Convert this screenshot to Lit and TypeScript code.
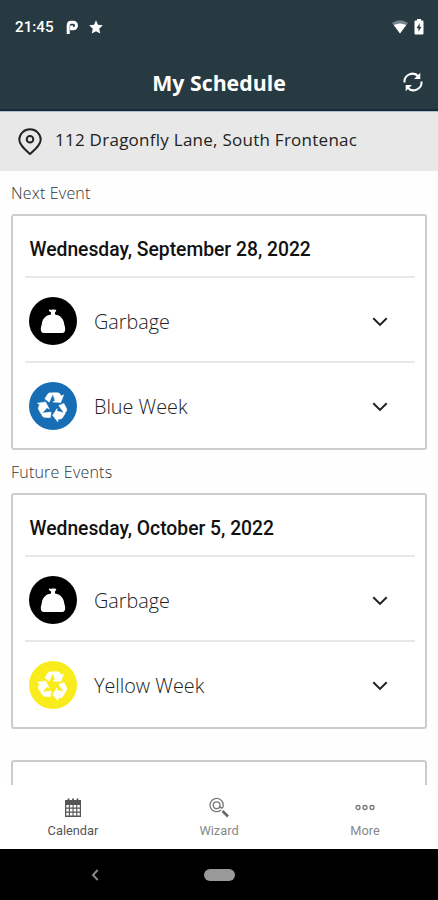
import { LitElement, html, css, svg } from "lit";
import { customElement } from "lit/decorators.js";

const chevron = html`<svg class="chev" viewBox="0 0 18 12" width="18" height="12"><path d="M2.300 2.200 9 8.900 15.700 2.200" fill="none" stroke="#222" stroke-width="2"/></svg>`;

const garbage = svg`<path fill="#fff" d="M20.400 12.600q1.500.5 3 0t3.400.2q.9.400.3 1.300l-1.100 1.500v2c5.600.8 8.600 4.500 9.200 9.400.3 1.500 1 3.200 1 5.100 0 2.500-1.100 3.900-3 3.900H14.800c-1.900 0-3-1.400-3-3.900 0-1.900.7-3.600 1-5.100.6-4.900 3.600-8.600 9.200-9.400v-2l-1.900-1.700q-.7-.9.300-1.300z"/>`;

const arrow = () => svg`<path d="M15.800 16.800 18.900 11.900Q19.800 10.700 21.600 10.700L24 11.500 20.200 20.200Z"/><path d="M23.300 10.700H28.700Q30.200 10.700 31.100 12.200L32.300 14 34.700 12.800 31.800 20.500 23.700 20.100 26.100 18.700Z"/>`;
const recycle = svg`<g fill="#fff" stroke="#fff" stroke-width=".5">
  ${[0, 120, 240].map((a) => svg`<g transform="rotate(${a} 24 24.600)">${arrow()}</g>`)}
</g>`;

interface Pickup { name: string; color: string; icon: unknown; }
const events: { date: string; items: Pickup[] }[] = [
  { date: "Wednesday, September 28, 2022", items: [{ name: "Garbage", color: "#000", icon: garbage }, { name: "Blue Week", color: "#176eb4", icon: recycle }] },
  { date: "Wednesday, October 5, 2022", items: [{ name: "Garbage", color: "#000", icon: garbage }, { name: "Yellow Week", color: "#f8ec1c", icon: recycle }] },
];

@customElement("app-root")
export class AppRoot extends LitElement {
  static styles = css`
    :host { display: flex; flex-direction: column; width: 438px; height: 900px; overflow: hidden; background: #fefefe; font-family: "Open Sans", sans-serif; color: #222; }
    * { box-sizing: border-box; }
    svg { display: block; flex: none; }
    .top { background: #273a41; height: 111px; flex: none; border-bottom: 2px solid #102c3f; color: #fff; }
    .status { height: 54px; display: flex; align-items: center; padding: 0 14px 0 15px; font: 500 15.200px/20px Roboto, sans-serif; }
    .status .p { margin-left: 12px; }
    .status .star { margin-left: 10px; }
    .status .wifi { margin-left: auto; }
    .status .bat { margin-left: 6px; }
    .bar { height: 55px; display: grid; grid-template-columns: 35px 1fr 35px; align-items: center; }
    h1 { grid-column: 2; margin: 2px 0 0; text-align: center; font-size: 21.300px; line-height: 30px; font-weight: 700; }
    .addr { height: 60px; flex: none; background: #e8e8e8; display: flex; align-items: center; padding-left: 18px; gap: 13px; font-size: 17px; letter-spacing: .26px; border-top: 1px solid #b5bcc0; white-space: nowrap; }
    .addr span { margin-bottom: 4px; }
    .list { flex: 1; min-height: 0; overflow: hidden; padding: 0 11px; }
    h2 { margin: 0; height: 43px; padding-top: 11px; font-size: 16px; letter-spacing: .2px; line-height: 22px; font-weight: 300; color: #333; }
    .card { border: 2px solid #c9cdce; border-radius: 3px; height: 236px; background: #fff; padding: 0 10px 0 12px; }
    .card.last { margin-top: 31px; }
    .date { height: 60px; padding: 7px 0 0 4.500px; font: 500 19.300px/54px Roboto, sans-serif; color: #111; white-space: nowrap; }
    .row { height: 85px; border-top: 2px solid #e7e8e8; display: flex; align-items: center; padding: 3px 26px 0 4px; font-size: 19.800px; font-weight: 300; }
    .row .name { margin-left: 17px; flex: 1; }
    .chev { margin-top: 1px; }
    .tabs { height: 64px; flex: none; background: #fff; display: grid; grid-template-columns: repeat(3, 146px); font: 400 12.800px/16px Roboto, sans-serif; color: #888; }
    .tab { display: flex; flex-direction: column; align-items: center; padding-top: 11px; gap: 5px; }
    .tab svg { height: 22px; }
    .tab.on { color: #555; }
    .sys { height: 51px; flex: none; background: #000; display: flex; align-items: center; padding-left: 90px; }
    .pill { width: 31px; height: 12px; border-radius: 6px; background: #999; margin-left: 104px; }
  `;

  card(e: (typeof events)[number]) {
    return html`<section class="card">
      <div class="date"><span>${e.date}</span></div>
      ${e.items.map((i) => html`<div class="row">
        <svg viewBox="0 0 48 48" width="48" height="48"><circle cx="24" cy="24" r="24" fill=${i.color} />${i.icon}</svg>
        <span class="name"><span>${i.name}</span></span>${chevron}
      </div>`)}
    </section>`;
  }

  render() {
    return html`
      <header class="top">
        <div class="status"><span>21:45</span>
          <svg class="p" width="13" height="15" viewBox="0 0 13 15"><path d="M2.200 14V5.500Q2.200 2.200 5 2.200H7.200a3.200 3.200 0 0 1 0 6.600H5.600V5.500" fill="none" stroke="#fff" stroke-width="3"/></svg>
          <svg class="star" width="14" height="14" viewBox="0 0 14 14"><path fill="#fff" d="M7 .3 9 4.800l4.800.5-3.600 3.400 1 4.900L7 11.200l-4.200 2.400 1-4.900L.2 5.300 5 4.800z"/></svg>
          <svg class="wifi" width="16" height="14" viewBox="0 0 16 14"><path fill="#77838a" d="M0 3Q8-2.500 16 3L8 13.500z"/><path fill="#fff" d="M1.800 5Q8 2 14.200 5L8 13.500z"/></svg>
          <svg class="bat" width="10" height="16" viewBox="0 0 10 16"><path fill="#fff" d="M3 0h4v1.500h1.500Q9.500 1.500 9.500 2.500v12q0 1-1 1h-7q-1 0-1-1v-12q0-1 1-1H3z"/><path fill="#273a41" d="M5.800 4 2.500 9.200h2v3.600L7.500 7.700h-2z"/></svg>
        </div>
        <div class="bar"><h1><span>My Schedule</span></h1>
          <svg width="20" height="20" viewBox="0 0 20 20"><g fill="none" stroke="#fff" stroke-width="2"><path d="M1.500 10.500A8 8 0 0 1 15.500 4.500M18.500 9.500A8 8 0 0 1 4.500 15.500"/></g><path fill="#fff" d="M17.300.8V7H11zM2.700 19.200V13H9z"/></svg>
        </div>
      </header>
      <div class="addr">
        <svg width="24" height="28" viewBox="0 0 24 28"><g fill="none" stroke="#222" stroke-width="2"><path d="M12 26C7 21.500 1.300 17 1.300 11.700a10.700 10.400 0 0 1 21.400 0C22.700 17 17 21.500 12 26z"/><circle cx="12" cy="11.300" r="3.300"/></g></svg>
        <span>112 Dragonfly Lane, South Frontenac</span>
      </div>
      <main class="list">
        <h2><span>Next Event</span></h2>${this.card(events[0])}
        <h2><span>Future Events</span></h2>${this.card(events[1])}
        <section class="card last"></section>
      </main>
      <nav class="tabs">
        <div class="tab on"><svg width="18" height="22" viewBox="0 0 18 22"><path fill="#555" fill-rule="evenodd" d="M1 4h16v17H1zM2.300 9v2.500h2.500V9zm3.600 0v2.500h2.600V9zm3.700 0v2.500h2.600V9zm3.700 0v2.500h2.500V9zM2.300 12.800v2.600h2.500v-2.600zm3.600 0v2.600h2.600v-2.600zm3.700 0v2.600h2.600v-2.600zm3.700 0v2.600h2.500v-2.600zM2.300 16.700v2.800h2.500v-2.800zm3.600 0v2.800h2.600v-2.800zm3.700 0v2.800h2.600v-2.800zm3.700 0v2.800h2.500v-2.800z"/><path d="M4.500 2.500v4M9 2.500v4M13.500 2.500v4" stroke="#555" stroke-width="1.800"/></svg><span>Calendar</span></div>
        <div class="tab"><svg width="20" height="22" viewBox="0 0 20 22"><g fill="none" stroke="#777" stroke-width="1.300"><path d="M12 14A6.600 6.600 0 1 1 14.200 9q0 3-1.700 3Q11 12 11 10"/><circle cx="7.600" cy="9.300" r="3.400"/></g><path d="m13.500 15 5.500 5.500" stroke="#666" stroke-width="2.500"/></svg><span>Wizard</span></div>
        <div class="tab"><svg width="20" height="22" viewBox="0 0 20 22"><g fill="none" stroke="#777" stroke-width="1.300"><circle cx="3" cy="11.500" r="2"/><circle cx="10" cy="11.500" r="2"/><circle cx="17" cy="11.500" r="2"/></g></svg><span>More</span></div>
      </nav>
      <footer class="sys"><svg width="10" height="14" viewBox="0 0 10 14"><path d="M7.700 2 3 7l4.700 5" fill="none" stroke="#888" stroke-width="2"/></svg><div class="pill"></div></footer>
    `;
  }
}
